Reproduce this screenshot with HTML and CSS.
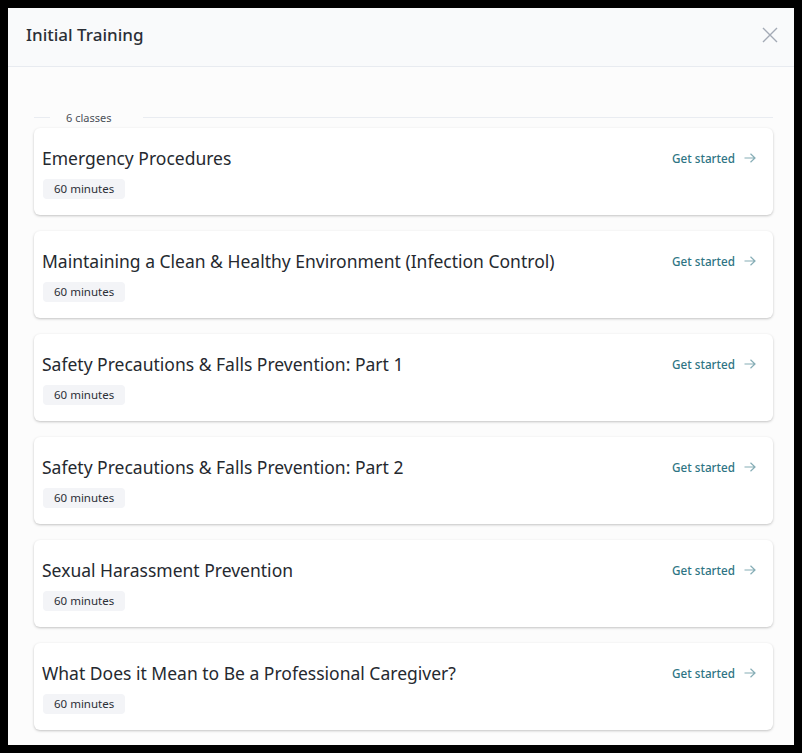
FILE: index.html
```html
<!DOCTYPE html>
<html lang="en">
<head>
    <meta charset="UTF-8">
    <title>Initial Training</title>
    <link rel="stylesheet" href="styles.css">
</head>
<body>
<div class="dialog">
    <div class="dialog-header">
        <h1 class="dialog-title">Initial Training</h1>
        <button class="close-btn" aria-label="Close">
            <svg width="16" height="16" viewBox="0 0 16 16"><path d="M1 1 L15 15 M15 1 L1 15" stroke="#a3aab5" stroke-width="1.4" fill="none"/></svg>
        </button>
    </div>
    <div class="dialog-body">
        <div class="divider">
            <span class="divider-line short"></span>
            <span class="divider-label">6 classes</span>
            <span class="divider-line"></span>
        </div>
        <ul class="class-list">
            <li class="class-card">
                <div class="class-info">
                    <h2 class="class-title">Emergency Procedures</h2>
                    <span class="badge">60 minutes</span>
                </div>
                <a class="start-link" href="#">Get started <svg class="arrow" width="12" height="10" viewBox="0 0 12 10"><path d="M0.5 5 H11 M6.5 0.8 L11 5 L6.5 9.2" stroke="#86adb6" stroke-width="1.2" fill="none"/></svg></a>
            </li>
            <li class="class-card">
                <div class="class-info">
                    <h2 class="class-title">Maintaining a Clean &amp; Healthy Environment (Infection Control)</h2>
                    <span class="badge">60 minutes</span>
                </div>
                <a class="start-link" href="#">Get started <svg class="arrow" width="12" height="10" viewBox="0 0 12 10"><path d="M0.5 5 H11 M6.5 0.8 L11 5 L6.5 9.2" stroke="#86adb6" stroke-width="1.2" fill="none"/></svg></a>
            </li>
            <li class="class-card">
                <div class="class-info">
                    <h2 class="class-title">Safety Precautions &amp; Falls Prevention: Part 1</h2>
                    <span class="badge">60 minutes</span>
                </div>
                <a class="start-link" href="#">Get started <svg class="arrow" width="12" height="10" viewBox="0 0 12 10"><path d="M0.5 5 H11 M6.5 0.8 L11 5 L6.5 9.2" stroke="#86adb6" stroke-width="1.2" fill="none"/></svg></a>
            </li>
            <li class="class-card">
                <div class="class-info">
                    <h2 class="class-title">Safety Precautions &amp; Falls Prevention: Part 2</h2>
                    <span class="badge">60 minutes</span>
                </div>
                <a class="start-link" href="#">Get started <svg class="arrow" width="12" height="10" viewBox="0 0 12 10"><path d="M0.5 5 H11 M6.5 0.8 L11 5 L6.5 9.2" stroke="#86adb6" stroke-width="1.2" fill="none"/></svg></a>
            </li>
            <li class="class-card">
                <div class="class-info">
                    <h2 class="class-title">Sexual Harassment Prevention</h2>
                    <span class="badge">60 minutes</span>
                </div>
                <a class="start-link" href="#">Get started <svg class="arrow" width="12" height="10" viewBox="0 0 12 10"><path d="M0.5 5 H11 M6.5 0.8 L11 5 L6.5 9.2" stroke="#86adb6" stroke-width="1.2" fill="none"/></svg></a>
            </li>
            <li class="class-card">
                <div class="class-info">
                    <h2 class="class-title">What Does it Mean to Be a Professional Caregiver?</h2>
                    <span class="badge">60 minutes</span>
                </div>
                <a class="start-link" href="#">Get started <svg class="arrow" width="12" height="10" viewBox="0 0 12 10"><path d="M0.5 5 H11 M6.5 0.8 L11 5 L6.5 9.2" stroke="#86adb6" stroke-width="1.2" fill="none"/></svg></a>
            </li>
        </ul>
    </div>
</div>
</body>
</html>
```

FILE: styles.css
```css
html, body {
    margin: 0;
    padding: 0;
    height: 100%;
}

body {
    background: #000;
    padding: 8px;
    box-sizing: border-box;
    font-family: "Noto Sans", "Open Sans", sans-serif;
    color: #2b2f36;
}

.dialog {
    height: 737px;
    background: #fcfcfc;
    display: flex;
    flex-direction: column;
    overflow: hidden;
}

.dialog-header {
    height: 59px;
    box-sizing: border-box;
    background: #f9fafb;
    border-bottom: 1px solid #e8ebf0;
    display: flex;
    align-items: center;
    justify-content: space-between;
    padding: 0 16px 6px 18px;
    flex-shrink: 0;
}

.dialog-title {
    margin: 0;
    font-size: 17px;
    font-weight: 500;
    color: #2b2f36;
}

.close-btn {
    border: 0;
    background: none;
    padding: 0;
    width: 16px;
    height: 16px;
    cursor: pointer;
    margin-top: 1px;
}

.dialog-body {
    padding: 42px 21px 0 26px;
}

.divider {
    display: flex;
    align-items: center;
    height: 16px;
    font-size: 11px;
    color: #4b5058;
    margin-bottom: 3px;
}

.divider-line {
    flex: 1;
    height: 1px;
    background: #e9ecf1;
}

.divider-line.short {
    flex: 0 0 16px;
}

.divider-label {
    padding: 0 32px 0 16px;
}

.class-list {
    list-style: none;
    margin: 0;
    padding: 0;
    display: flex;
    flex-direction: column;
    gap: 16px;
}

.class-card {
    background: #fff;
    border-radius: 6px;
    box-shadow: 0 1px 3px rgba(0, 0, 0, 0.18), 0 1px 2px rgba(0, 0, 0, 0.06);
    height: 87px;
    box-sizing: border-box;
    padding: 17px 17px 0 8px;
    display: flex;
    justify-content: space-between;
    align-items: flex-start;
}

.class-title {
    margin: 0 0 5px;
    font-size: 17.5px;
    font-weight: 400;
    line-height: 26px;
    color: #25292f;
}

.badge {
    display: inline-block;
    background: #f3f4f7;
    border-radius: 4px;
    font-size: 11.5px;
    line-height: 20px;
    padding: 0 11px;
    margin-left: 1px;
    color: #2b2f36;
}

.start-link {
    display: flex;
    align-items: center;
    font-size: 11.7px;
    font-weight: 500;
    color: #2e7484;
    text-decoration: none;
    line-height: 20px;
    margin-top: 3px;
    white-space: nowrap;
}

.arrow {
    margin-left: 9px;
}
```
